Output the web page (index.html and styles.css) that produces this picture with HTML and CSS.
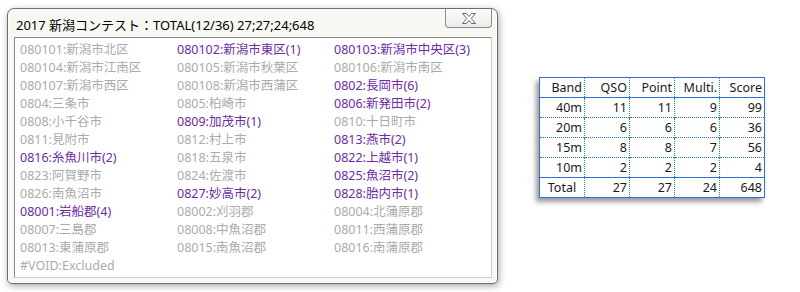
FILE: index.html
```
<html>
<head>
    <meta charset="utf-8">
    <title>新潟コンテスト</title>
    <link rel="stylesheet" href="styles.css">
</head>
<body>
<div class="screen">
    <div class="window">
        <div class="titlebar">
            <span class="title">2017 新潟コンテスト：TOTAL(12/36) 27;27;24;648</span>
            <span class="btn-close">
                <svg width="14" height="11" viewBox="0 0 14 11">
                    <polygon points="0.5,0.5 4.5,0.5 7,3.5 9.5,0.5 13.5,0.5 9.2,5.5 13.5,10.5 9.5,10.5 7,7.5 4.5,10.5 0.5,10.5 4.8,5.5" fill="#fff" stroke="#6b6b6b" stroke-width="1" stroke-linejoin="round"/>
                </svg>
            </span>
        </div>
        <div class="list">
            <span class="off">080101:新潟市北区</span>
            <span class="on">080102:新潟市東区(1)</span>
            <span class="on">080103:新潟市中央区(3)</span>
            <span class="off">080104:新潟市江南区</span>
            <span class="off">080105:新潟市秋葉区</span>
            <span class="off">080106:新潟市南区</span>
            <span class="off">080107:新潟市西区</span>
            <span class="off">080108:新潟市西蒲区</span>
            <span class="on">0802:長岡市(6)</span>
            <span class="off">0804:三条市</span>
            <span class="off">0805:柏崎市</span>
            <span class="on">0806:新発田市(2)</span>
            <span class="off">0808:小千谷市</span>
            <span class="on">0809:加茂市(1)</span>
            <span class="off">0810:十日町市</span>
            <span class="off">0811:見附市</span>
            <span class="off">0812:村上市</span>
            <span class="on">0813:燕市(2)</span>
            <span class="on">0816:糸魚川市(2)</span>
            <span class="off">0818:五泉市</span>
            <span class="on">0822:上越市(1)</span>
            <span class="off">0823:阿賀野市</span>
            <span class="off">0824:佐渡市</span>
            <span class="on">0825:魚沼市(2)</span>
            <span class="off">0826:南魚沼市</span>
            <span class="on">0827:妙高市(2)</span>
            <span class="on">0828:胎内市(1)</span>
            <span class="on">08001:岩船郡(4)</span>
            <span class="off">08002:刈羽郡</span>
            <span class="off">08004:北蒲原郡</span>
            <span class="off">08007:三島郡</span>
            <span class="off">08008:中魚沼郡</span>
            <span class="off">08011:西蒲原郡</span>
            <span class="off">08013:東蒲原郡</span>
            <span class="off">08015:南魚沼郡</span>
            <span class="off">08016:南蒲原郡</span>
            <span class="off">#VOID:Excluded</span>
        </div>
    </div>
    <table class="score">
        <tr class="head">
            <td>Band</td><td>QSO</td><td>Point</td><td>Multi.</td><td>Score</td>
        </tr>
        <tr>
            <td>40m</td><td>11</td><td>11</td><td>9</td><td>99</td>
        </tr>
        <tr>
            <td>20m</td><td>6</td><td>6</td><td>6</td><td>36</td>
        </tr>
        <tr>
            <td>15m</td><td>8</td><td>8</td><td>7</td><td>56</td>
        </tr>
        <tr>
            <td>10m</td><td>2</td><td>2</td><td>2</td><td>4</td>
        </tr>
        <tr class="total">
            <td>Total</td><td>27</td><td>27</td><td>24</td><td>648</td>
        </tr>
    </table>
</div>
</body>
</html>
```

FILE: styles.css
```
body {
    margin: 0;
    background: #fff;
    font-family: "Noto Sans", "Noto Sans CJK JP", sans-serif;
    font-size: 12px;
    --frameColor: #6d6d6d;
    --grayText: #ababab;
    --purpleText: #6e2aa8;
}

.screen {
    display: flex;
    align-items: flex-start;
    padding: 8px 0 0 7px;
}

.window {
    width: 478px;
    height: 269px;
    padding: 0 5px 5px 6px;
    border: 1px solid var(--frameColor);
    border-radius: 7px 7px 5px 5px;
    background: #f8f8f3;
    box-shadow: inset 0 0 0 1px #fff, 1px 2px 7px rgba(0, 0, 0, .35);
}

.titlebar {
    display: flex;
    align-items: flex-start;
    height: 28px;
}

.title {
    color: #000;
    font-size: 13px;
    line-height: 24px;
    padding: 4px 0 0 2px;
    white-space: nowrap;
}

.btn-close {
    display: flex;
    align-items: center;
    justify-content: center;
    margin-left: auto;
    width: 45px;
    height: 18px;
    border: 1px solid #8c8c8c;
    border-top: 0;
    border-radius: 0 0 4px 4px;
    background: linear-gradient(#fdfdfd, #ececec);
}

.list {
    display: grid;
    grid-template-columns: 157px 157px 157px;
    grid-auto-rows: 18px;
    align-content: start;
    height: 236px;
    padding: 3px 0 0 5px;
    border: 1px solid #8f8f8f;
    border-color: #8a8a8a #d0d0d0 #d0d0d0 #8a8a8a;
    background: #fff;
    font-size: 12.5px;
}

.list span {
    line-height: 18px;
    white-space: nowrap;
}

.list .off {
    color: var(--grayText);
}

.list .on {
    color: var(--purpleText);
}

.score {
    margin: 69px 0 0 41px;
    border-collapse: collapse;
    border: 1px solid #2a72dc;
    background: #fff;
    box-shadow: -3px 4px 5px rgba(0, 0, 0, .4);
    color: #1a1a1a;
    font-family: "Noto Sans", "Noto Sans CJK JP", sans-serif;
    font-size: 12.5px;
}

.score td {
    width: 42px;
    height: 19.8px;
    padding: 1px 2px 0 0;
    text-align: right;
    line-height: 18px;
    border-left: 1px dotted #1e9e4c;
    border-top: 1px dotted #2a72dc;
}

.score td:first-child {
    border-left: 0;
}

.score .head td {
    border-top: 0;
}

.score tr:nth-child(2) td,
.score .total td {
    border-top: 1px solid #2a72dc;
}

.score .total td:first-child {
    text-align: center;
    padding-right: 0;
}
```
